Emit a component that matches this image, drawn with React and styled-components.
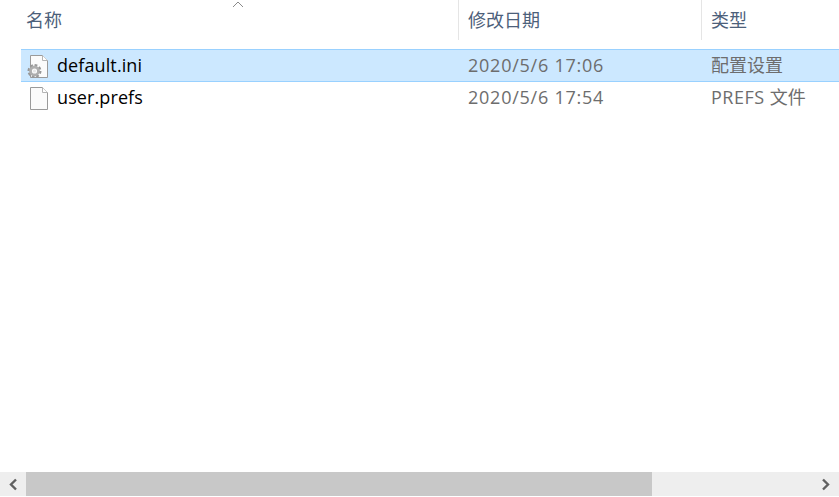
import React from "react";
import styled, { createGlobalStyle } from "styled-components";

const GlobalStyle = createGlobalStyle`
  html, body {
    margin: 0;
    padding: 0;
    background: #fff;
    overflow: hidden;
  }
`;

const FONT = `"Open Sans", "Noto Sans", "Noto Sans CJK SC", sans-serif`;

const Window = styled.div`
  width: 839px;
  height: 497px;
  display: flex;
  flex-direction: column;
  overflow: hidden;
  font-family: ${FONT};
  background: #fff;
`;

const Header = styled.div`
  position: relative;
  display: grid;
  grid-template-columns: 458px 243px 138px;
  height: 40px;
  margin-bottom: 9px;
`;

const SortCaret = styled.svg`
  position: absolute;
  left: 232px;
  top: 1px;
`;

const HeaderCell = styled.div`
  display: flex;
  align-items: center;
  padding-left: ${(p) => p.$pad}px;
  padding-bottom: 2px;
  font-size: 18px;
  color: #4c607a;
  border-left: ${(p) => (p.$divider ? "1px solid #e5e5e5" : "none")};
`;

const Rows = styled.div`
  flex: 1;
  padding-left: 21px;
`;

const Row = styled.div`
  display: grid;
  grid-template-columns: 437px 243px 138px;
  height: 33px;
  box-sizing: border-box;
  align-items: center;
  background: ${(p) => (p.$selected ? "#cce8ff" : "transparent")};
  border-top: 1px solid ${(p) => (p.$selected ? "#99d1ff" : "transparent")};
  border-bottom: 1px solid ${(p) => (p.$selected ? "#99d1ff" : "transparent")};
  margin-bottom: -1px;
`;

const NameCell = styled.div`
  display: flex;
  align-items: center;
  gap: 6px;
  padding-left: 6px;
  font-size: 18px;
  letter-spacing: 0.1px;
  color: #000;
  line-height: 24px;
`;

const FileName = styled.span`
  margin-top: -2px;
`;

const InfoCell = styled.div`
  padding-left: ${(p) => p.$pad}px;
  font-size: 18px;
  line-height: 24px;
  color: #6d6d6d;
  white-space: nowrap;
  margin-top: -2px;
`;

const Latin = styled.span`
  letter-spacing: ${(p) => p.$spacing}px;
`;

const ScrollBar = styled.div`
  display: flex;
  height: 24px;
  margin-bottom: 1px;
  background: #eeeeee;
`;

const ArrowButton = styled.div`
  width: 26px;
  display: flex;
  align-items: center;
  justify-content: center;
`;

const Track = styled.div`
  flex: 1;
`;

const Thumb = styled.div`
  width: 626px;
  height: 100%;
  background: #c8c8c8;
`;

const FileIcon = ({ gear }) => (
  <svg width="24" height="26" viewBox="0 0 24 26">
    <path d="M3.5 2.5H15.5L20.5 7.5V24.5H3.5Z" fill="#fbfbfb" stroke="#9a9a9a" />
    <path d="M15.5 2.5V7.5H20.5" fill="#fff" stroke="#b4b4b4" />
    {gear && (
      <g>
        <circle
          cx="7.5"
          cy="18"
          r="5.2"
          fill="none"
          stroke="#979797"
          strokeWidth="3.6"
          strokeDasharray="2.4 1.6"
        />
        <circle cx="7.5" cy="18" r="4" fill="none" stroke="#aeaeae" strokeWidth="2.8" />
        <circle cx="7.5" cy="18" r="1.6" fill="#e6e6e6" />
      </g>
    )}
  </svg>
);

const Chevron = ({ dir }) => (
  <svg width="10" height="13" viewBox="0 0 10 13">
    <path
      d={dir === "left" ? "M8 1.5L3 6.5L8 11.5" : "M2 1.5L7 6.5L2 11.5"}
      fill="none"
      stroke="#606060"
      strokeWidth="2.4"
    />
  </svg>
);

const files = [
  { name: "default.ini", date: "2020/5/6 17:06", type: "配置设置", selected: true },
  { name: "user.prefs", date: "2020/5/6 17:54", latin: "PREFS ", type: "文件" },
];

export default function App() {
  return (
    <Window>
      <GlobalStyle />
      <Header>
        <SortCaret width="12" height="7" viewBox="0 0 12 7">
          <path d="M1 6L6 1L11 6" fill="none" stroke="#8a8a8a" />
        </SortCaret>
        <HeaderCell $pad={26}>名称</HeaderCell>
        <HeaderCell $pad={9} $divider>修改日期</HeaderCell>
        <HeaderCell $pad={9} $divider>类型</HeaderCell>
      </Header>
      <Rows>
        {files.map((f) => (
          <Row key={f.name} $selected={f.selected}>
            <NameCell>
              <FileIcon gear={f.selected} />
              <FileName>{f.name}</FileName>
            </NameCell>
            <InfoCell $pad={10}><Latin $spacing={0.75}>{f.date}</Latin></InfoCell>
            <InfoCell $pad={10}>
              {f.latin && <Latin $spacing={0.5}>{f.latin}</Latin>}
              {f.type}
            </InfoCell>
          </Row>
        ))}
      </Rows>
      <ScrollBar>
        <ArrowButton><Chevron dir="left" /></ArrowButton>
        <Track><Thumb /></Track>
        <ArrowButton><Chevron dir="right" /></ArrowButton>
      </ScrollBar>
    </Window>
  );
}
